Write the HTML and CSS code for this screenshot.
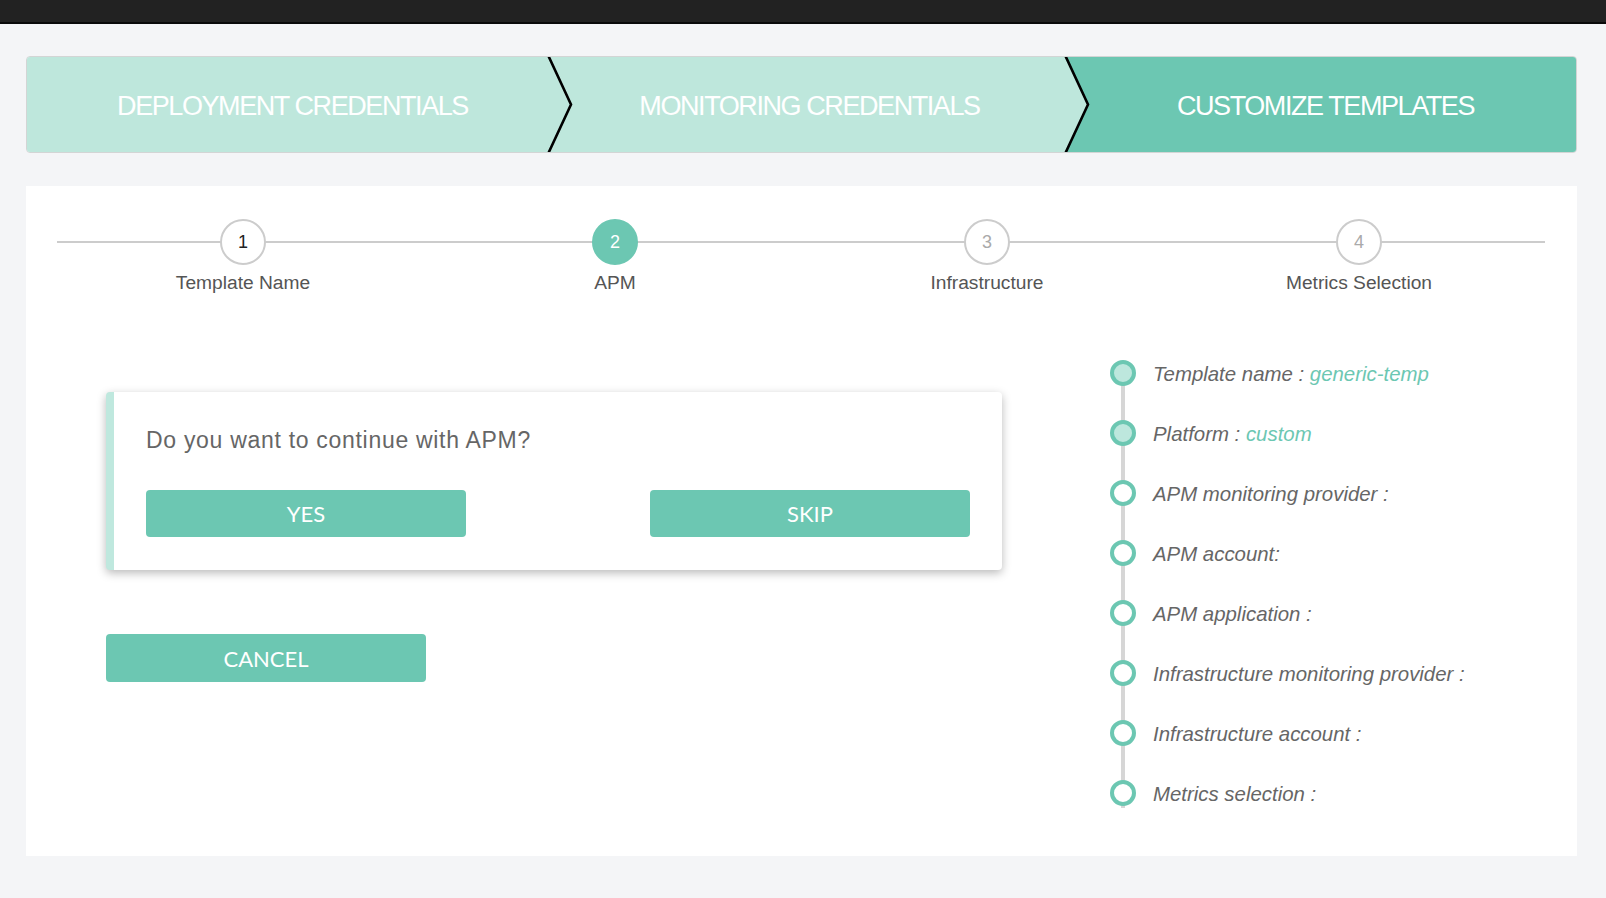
FILE: index.html
```html
<!DOCTYPE html>
<html lang="en">
<head>
<meta charset="utf-8">
<title>Customize Templates</title>
<link rel="stylesheet" href="styles.css">
</head>
<body>
<div class="topbar"></div>
<main class="page">
  <nav class="wizard">
    <div class="seg seg-first"><span>DEPLOYMENT CREDENTIALS</span>
      <svg class="chev" viewBox="0 0 26 95" aria-hidden="true"><polygon points="0,0 2,0 25,47.5 2,95 0,95" fill="#bee7dc"/><polyline points="2,-2 25,47.5 2,97" fill="none" stroke="#000" stroke-width="2.6"/></svg>
    </div>
    <div class="seg seg-second"><span>MONITORING CREDENTIALS</span>
      <svg class="chev" viewBox="0 0 26 95" aria-hidden="true"><polygon points="0,0 2,0 25,47.5 2,95 0,95" fill="#bee7dc"/><polyline points="2,-2 25,47.5 2,97" fill="none" stroke="#000" stroke-width="2.6"/></svg>
    </div>
    <div class="seg seg-active"><span>CUSTOMIZE TEMPLATES</span></div>
  </nav>

  <section class="card">
    <ol class="steps">
      <li class="step"><span class="num num-done">1</span><span class="label">Template Name</span></li>
      <li class="step"><span class="num num-active">2</span><span class="label">APM</span></li>
      <li class="step"><span class="num num-todo">3</span><span class="label">Infrastructure</span></li>
      <li class="step"><span class="num num-todo">4</span><span class="label">Metrics Selection</span></li>
    </ol>

    <div class="body">
      <div class="left">
        <div class="dialog">
          <p class="question">Do you want to continue with APM?</p>
          <div class="actions">
            <button class="btn">YES</button>
            <button class="btn">SKIP</button>
          </div>
        </div>
        <button class="btn cancel">CANCEL</button>
      </div>

      <ul class="timeline">
        <li class="tl-item"><span class="dot dot-filled"></span><span class="tl-text">Template name : <span class="val">generic-temp</span></span></li>
        <li class="tl-item"><span class="dot dot-filled"></span><span class="tl-text">Platform : <span class="val">custom</span></span></li>
        <li class="tl-item"><span class="dot"></span><span class="tl-text">APM monitoring provider :</span></li>
        <li class="tl-item"><span class="dot"></span><span class="tl-text">APM account:</span></li>
        <li class="tl-item"><span class="dot"></span><span class="tl-text">APM application :</span></li>
        <li class="tl-item"><span class="dot"></span><span class="tl-text">Infrastructure monitoring provider :</span></li>
        <li class="tl-item"><span class="dot"></span><span class="tl-text">Infrastructure account :</span></li>
        <li class="tl-item"><span class="dot"></span><span class="tl-text">Metrics selection :</span></li>
      </ul>
    </div>
  </section>
</main>
</body>
</html>
```

FILE: styles.css
```css
* { box-sizing: border-box; }

body {
  margin: 0;
  background: #f4f5f7;
  font-family: "Liberation Sans", Arial, sans-serif;
}

.topbar {
  height: 24px;
  background: #222222;
  border-bottom: 2px solid #0a0a0a;
}

.page {
  padding: 32px 29px 0 26px;
}

/* wizard bar */
.wizard {
  display: grid;
  grid-template-columns: 521px 517px 1fr;
  height: 97px;
  border: 1px solid #d3d5d5;
  border-radius: 4px;
  overflow: hidden;
}

.seg {
  position: relative;
  display: flex;
  align-items: center;
  justify-content: center;
  padding: 3px 0 0 10px;
  color: #fff;
  font-size: 27px;
  letter-spacing: -1.42px;
  white-space: nowrap;
}

.seg-first { background: #bee7dc; z-index: 2; }
.seg-second { background: #bee7dc; z-index: 1; padding-left: 6px; }
.seg-active { background: #6cc7b2; }

.chev {
  position: absolute;
  left: calc(100% - 2px);
  top: 0;
  width: 26px;
  height: 95px;
  overflow: visible;
}

/* card */
.card {
  margin-top: 33px;
  background: #fff;
  padding: 33px 32px 50px 31px;
}

.steps {
  list-style: none;
  margin: 0;
  padding: 0;
  display: grid;
  grid-template-columns: repeat(4, 1fr);
  position: relative;
}

.steps::before {
  content: "";
  position: absolute;
  left: 0;
  right: 0;
  top: 22px;
  height: 2px;
  background: #cccccc;
}

.step {
  position: relative;
  display: flex;
  flex-direction: column;
  align-items: center;
}

.num {
  width: 46px;
  height: 46px;
  border-radius: 50%;
  border: 2px solid #cccccc;
  background: #fff;
  display: flex;
  align-items: center;
  justify-content: center;
  font-size: 18px;
  color: #222;
}

.num-active {
  background: #6cc7b2;
  border-color: #6cc7b2;
  color: #fff;
}

.num-todo { color: #aaaaaa; }

.label {
  margin-top: 7px;
  font-size: 19.2px;
  line-height: 22px;
  color: #555;
}

/* body */
.body {
  display: flex;
  margin-top: 66px;
}

.left {
  margin-left: 49px;
  width: 896px;
  flex: none;
  padding-top: 32px;
}

.dialog {
  background: #fff;
  border-left: 8px solid #bfe8de;
  border-radius: 4px;
  box-shadow: 0 3px 10px rgba(0, 0, 0, 0.28);
  padding: 34px 32px 33px;
}

.question {
  margin: 0 0 36px;
  font-size: 23px;
  line-height: 28px;
  color: #666;
  letter-spacing: 0.7px;
}

.actions {
  display: flex;
  justify-content: space-between;
}

.btn {
  width: 320px;
  height: 47px;
  border: 0;
  border-radius: 4px;
  background: #6cc7b2;
  color: #fff;
  font-family: Lato, "Liberation Sans", sans-serif;
  font-size: 22px;
  padding: 0;
}

.cancel {
  display: block;
  margin-top: 64px;
  height: 48px;
}

/* timeline */
.timeline {
  list-style: none;
  margin: 0 0 0 108px;
  padding: 0;
  position: relative;
}

.timeline::before {
  content: "";
  position: absolute;
  left: 11px;
  top: 13px;
  bottom: -2px;
  width: 4px;
  background: #d6d6d6;
}

.tl-item {
  position: relative;
  display: flex;
  align-items: center;
  height: 26px;
}

.tl-item + .tl-item { margin-top: 34px; }

.dot {
  flex: none;
  width: 26px;
  height: 26px;
  border-radius: 50%;
  border: 4px solid #6cc7b2;
  background: #fff;
}

.dot-filled { background: #bde7dd; }

.tl-text {
  margin-left: 17px;
  padding-top: 2px;
  font-size: 20.4px;
  font-style: italic;
  color: #666;
  white-space: nowrap;
}

.val { color: #6cc7b2; }
```
